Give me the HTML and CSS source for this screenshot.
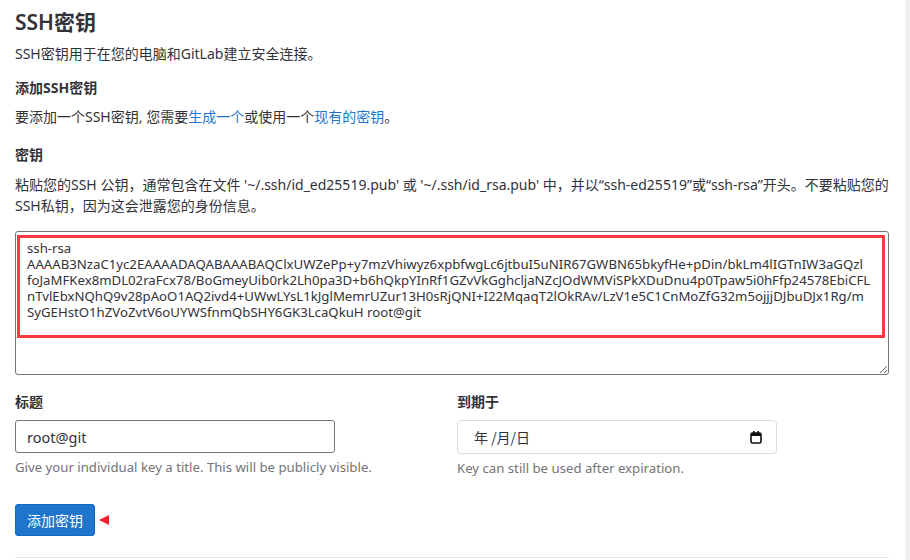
FILE: index.html
```html
<!DOCTYPE html>
<html>
<head>
  <link rel="stylesheet" href="styles.css">
</head>
<body>
  <div class="page">
    <main class="content">
      <h3 class="page-title">SSH密钥</h3>
      <p class="lead">SSH密钥用于在您的电脑和GitLab建立安全连接。</p>
      <h4 class="sub-title">添加SSH密钥</h4>
      <p class="intro">要添加一个SSH密钥, 您需要<a href="#">生成一个</a>或使用一个<a href="#">现有的密钥</a>。</p>

      <form class="key-form">
        <label class="field-label" for="keyInput">密钥</label>
        <p class="hint">粘贴您的SSH 公钥，通常包含在文件 '~/.ssh/id_ed25519.pub' 或 '~/.ssh/id_rsa.pub' 中，并以“ssh-ed25519”或“ssh-rsa”开头。不要粘贴您的SSH私钥，因为这会泄露您的身份信息。</p>
        <div class="key-box">
          <textarea id="keyInput" class="key-input">ssh-rsa
AAAAB3NzaC1yc2EAAAADAQABAAABAQClxUWZePp+y7mzVhiwyz6xpbfwgLc6jtbuI5uNIR67GWBN65bkyfHe+pDin/bkLm4lIGTnIW3aGQzl
foJaMFKex8mDL02raFcx78/BoGmeyUib0rk2Lh0pa3D+b6hQkpYInRf1GZvVkGghcljaNZcJOdWMViSPkXDuDnu4p0Tpaw5i0hFfp24578EbiCFL
nTvlEbxNQhQ9v28pAoO1AQ2ivd4+UWwLYsL1kJglMemrUZur13H0sRjQNI+I22MqaqT2lOkRAv/LzV1e5C1CnMoZfG32m5ojjjDJbuDJx1Rg/m
SyGEHstO1hZVoZvtV6oUYWSfnmQbSHY6GK3LcaQkuH root@git</textarea>
          <div class="highlight"></div>
        </div>

        <div class="form-row">
          <div class="form-col">
            <label class="field-label" for="titleInput">标题</label>
            <input type="text" id="titleInput" class="text-input" value="root@git" />
            <p class="help">Give your individual key a title. This will be publicly visible.</p>
          </div>
          <div class="form-col">
            <label class="field-label">到期于</label>
            <div class="date-input">
              <span class="date-text">年 /月/日</span>
              <svg class="cal-icon" width="12" height="13" viewBox="0 0 12 13">
                <rect x="1" y="2" width="10" height="10" rx="1.5" fill="none" stroke="#111" stroke-width="1.6"/>
                <rect x="1" y="2" width="10" height="3" fill="#111"/>
                <rect x="3" y="0" width="1.6" height="3" fill="#111"/>
                <rect x="7.4" y="0" width="1.6" height="3" fill="#111"/>
              </svg>
            </div>
            <p class="help">Key can still be used after expiration.</p>
          </div>
        </div>

        <div class="actions">
          <button type="button" class="btn-primary">添加密钥</button>
          <span class="pointer"></span>
        </div>
      </form>
      <hr class="divider">
    </main>
    <div class="scroll-track"></div>
  </div>
</body>
</html>
```

FILE: styles.css
```css
body {
  margin: 0;
  font-family: "Noto Sans", "Noto Sans CJK SC", sans-serif;
  font-size: 14px;
  color: #333238;
  background: #fff;
}
.page {
  display: flex;
  min-height: 560px;
}
.content {
  flex: 1;
  padding: 8px 16px 0 15px;
}
.scroll-track {
  width: 5px;
  background: #f1f1f1;
}
p {
  margin: 0;
  line-height: 20px;
}
a {
  color: #1f75cb;
  text-decoration: none;
}
.page-title {
  margin: 0;
  font-size: 21px;
  font-weight: 600;
  line-height: 28px;
}
.lead {
  margin-top: 8px;
}
.sub-title {
  margin: 14px 0 0;
  font-size: 14px;
  font-weight: 700;
  line-height: 20px;
}
.intro {
  margin-top: 9px;
}
.key-form {
  margin-top: 18px;
}
.field-label {
  display: block;
  font-weight: 700;
  line-height: 20px;
}
.hint {
  margin-top: 9px;
  line-height: 21px;
}
.key-box {
  position: relative;
  margin-top: 15px;
}
.key-input {
  display: block;
  width: 100%;
  height: 144px;
  box-sizing: border-box;
  padding: 8px 11px;
  border: 1px solid #767676;
  border-radius: 3px;
  font-family: "Noto Sans", sans-serif;
  font-size: 13.2px;
  line-height: 16px;
  color: #333238;
  white-space: pre;
  overflow: hidden;
}
.highlight {
  position: absolute;
  left: 2px;
  top: 4px;
  width: 868px;
  height: 103px;
  box-sizing: border-box;
  border: 3px solid #fd3a3e;
  pointer-events: none;
}
.form-row {
  display: flex;
  gap: 10px;
  margin-top: 17px;
}
.form-col {
  flex: 1;
}
.text-input {
  display: block;
  width: 320px;
  height: 33px;
  margin-top: 8px;
  box-sizing: border-box;
  padding: 0 11px;
  border: 1px solid #767676;
  border-radius: 3px;
  font-family: "Noto Sans", sans-serif;
  font-size: 14.5px;
  color: #333238;
}
.date-input {
  display: flex;
  align-items: center;
  justify-content: space-between;
  width: 320px;
  height: 34px;
  margin-top: 8px;
  box-sizing: border-box;
  padding: 0 14px 0 16px;
  border: 1px solid #dcdcde;
  border-radius: 4px;
  font-family: "Noto Sans CJK SC", sans-serif;
  font-size: 14px;
  color: #333238;
}
.help {
  margin-top: 4px;
  font-size: 13.2px;
  color: #737278;
}
.actions {
  display: flex;
  align-items: center;
  gap: 4px;
  margin-top: 26px;
}
.btn-primary {
  height: 32px;
  padding: 0 11px;
  background-color: #1f75cb;
  border: 1px solid #1068bf;
  border-radius: 3px;
  color: #fff;
  font-family: "Noto Sans CJK SC", sans-serif;
  font-size: 14px;
}
.pointer {
  width: 0;
  height: 0;
  border-top: 5px solid transparent;
  border-bottom: 5px solid transparent;
  border-right: 10px solid #f3222b;
}
.divider {
  margin: 21px 0 0;
  border: 0;
  border-top: 1px solid #e8e8e8;
}
```
